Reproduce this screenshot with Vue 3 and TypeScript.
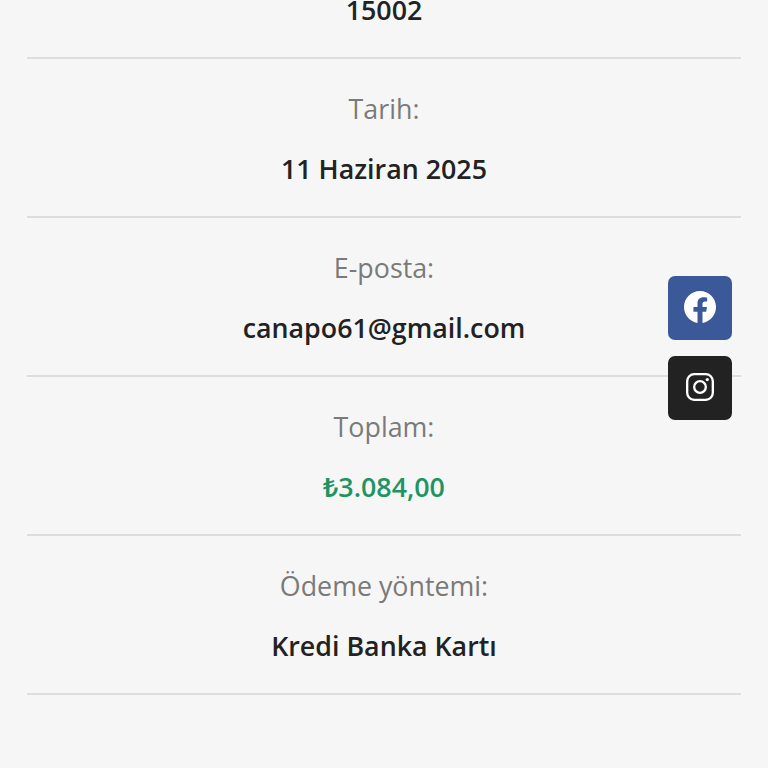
<script setup lang="ts">
interface OrderRow {
	label: string
	value: string
	accent?: boolean
}

const rows: OrderRow[] = [
	{ label: 'Sipariş numarası:', value: '15002' },
	{ label: 'Tarih:', value: '11 Haziran 2025' },
	{ label: 'E-posta:', value: 'canapo61@gmail.com' },
	{ label: 'Toplam:', value: '₺3.084,00', accent: true },
	{ label: 'Ödeme yöntemi:', value: 'Kredi Banka Kartı' },
]
</script>

<template>
	<main class="page">
		<ul class="order-list">
			<li v-for="row in rows" :key="row.value" class="order-row">
				<span class="label">{{ row.label }}</span>
				<strong class="value" :class="{ accent: row.accent }">{{ row.value }}</strong>
			</li>
		</ul>

		<nav class="social" aria-label="Sosyal medya">
			<a class="social-link facebook" href="#" aria-label="Facebook">
				<svg viewBox="0 0 24 24" width="32" height="32" fill="#fff">
					<path d="M24 12.07C24 5.4 18.63 0 12 0S0 5.4 0 12.07c0 6.03 4.39 11.02 10.13 11.93v-8.44H7.08v-3.49h3.05V9.41c0-3.02 1.79-4.69 4.53-4.69 1.31 0 2.69.24 2.69.24v2.97h-1.51c-1.49 0-1.96.93-1.96 1.89v2.25h3.33l-.53 3.49h-2.8V24C19.61 23.09 24 18.1 24 12.07z" />
				</svg>
			</a>
			<a class="social-link instagram" href="#" aria-label="Instagram">
				<svg viewBox="0 0 24 24" width="28" height="28" fill="none" stroke="#fff" stroke-width="2">
					<rect x="1" y="1" width="22" height="22" rx="6" />
					<circle cx="12" cy="12" r="5" />
					<circle cx="18.2" cy="5.6" r="1.4" fill="#fff" stroke="none" />
				</svg>
			</a>
		</nav>
	</main>
</template>

<style scoped>
.page {
	height: 768px;
	overflow: hidden;
	background: #f6f6f6;
	font-family: "Open Sans", "Noto Sans", sans-serif;
}

.order-list {
	list-style: none;
	margin: -100px 27px 0;
	padding: 0;
}

.order-row {
	display: flex;
	flex-direction: column;
	align-items: center;
	gap: 24px;
	height: 159px;
	box-sizing: border-box;
	padding-top: 32px;
	border-bottom: 2px solid #dddddd;
}

.label {
	font-size: 26.8px;
	line-height: 36px;
	color: #7a7a7a;
}

.value {
	font-size: 26.8px;
	line-height: 36px;
	font-weight: 570;
	color: #222222;
}

.value.accent {
	color: #1f9463;
}

.social {
	position: absolute;
	top: 276px;
	right: 36px;
	display: flex;
	flex-direction: column;
	gap: 16px;
}

.social-link {
	display: flex;
	align-items: center;
	justify-content: center;
	width: 64px;
	height: 64px;
	box-sizing: border-box;
	padding-bottom: 3px;
	border-radius: 7px;
}

.facebook {
	background: #3b5998;
}

.instagram {
	background: #222222;
}
</style>
